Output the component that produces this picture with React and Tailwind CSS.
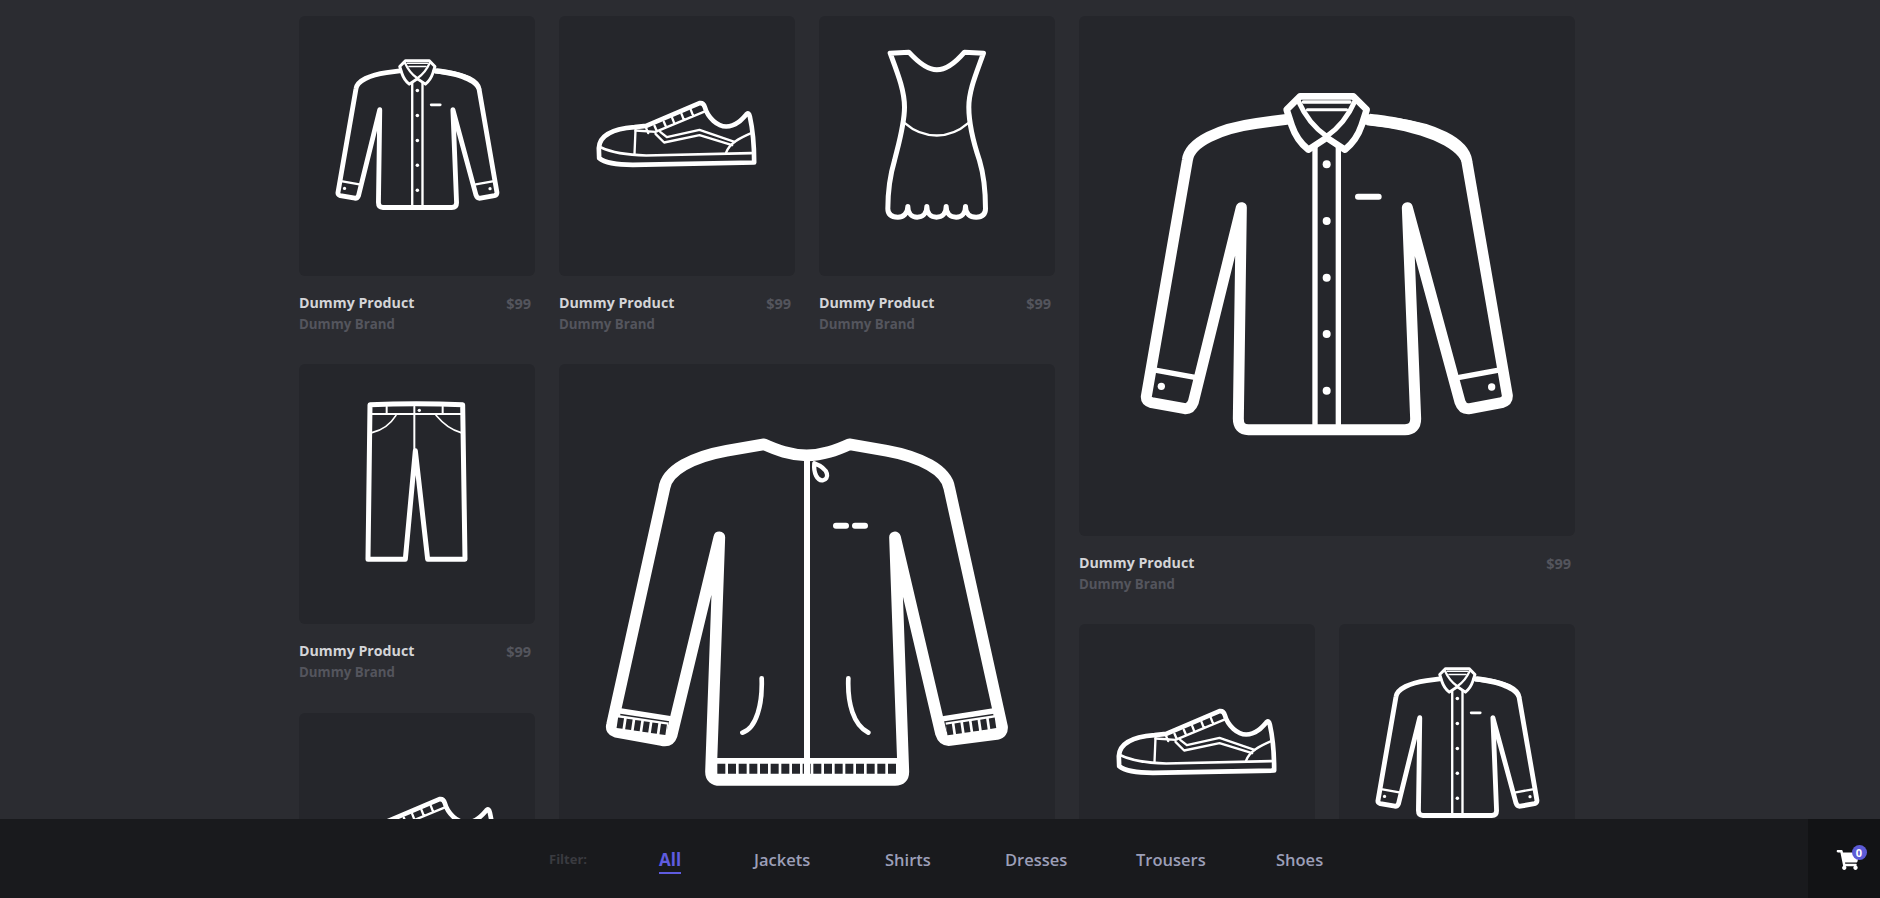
import React from "react";
import { FaShoppingCart } from "react-icons/fa";

const font = "font-['Open_Sans',sans-serif]";
const W = "#ffffff";
const CARD = "#25262b";

// Icons are traced at 3x the big size, so the viewBox is what scales them down
const Shirt = ({ size }) => (
  <svg width={size} height={size} viewBox="141 -19 1260 1260" fill="none" stroke={W} strokeLinecap="round" strokeLinejoin="round">
    <path strokeWidth="33" d="M650 177 L560 189 C450 204 358 245 352 300 L229 1008 Q228 1022 245 1027 L345 1045 Q362 1046 370 1025 L514 442 L505 1075 Q505 1108 535 1108 L1005 1108 Q1037 1108 1037 1075 L1012 442 L1170 1025 Q1178 1048 1200 1045 L1295 1027 Q1313 1022 1312 1005 L1190 300 C1180 245 1090 204 980 189 L890 177" />
    <path stroke="none" fill={W} d="M900 160 C1010 172 1185 205 1207 305 L1175 305 C1160 262 1060 212 890 195 Z" />
    <path strokeWidth="16" d="M260 930 L375 951 M1168 951 L1282 930" />
    <path strokeWidth="20" d="M690 108 L850 108 L890 148 L875 195 Q860 240 825 268 L770 232 L715 268 Q680 240 665 195 L650 148 Z" />
    <path strokeWidth="15" d="M685 122 Q715 190 770 228 Q825 190 855 122" />
    <path strokeWidth="10" d="M700 125 L840 125" />
    <path strokeWidth="9" d="M712 148 L830 148" />
    <path strokeWidth="16" d="M735 258 L735 1095 M805 258 L805 1095" />
    <path strokeWidth="18" d="M864 409 L926 409" />
    <g fill={W} stroke="none">
      {[312, 482, 652, 821, 991].map((y) => (
        <circle key={y} cx="770" cy={y} r="12" />
      ))}
      <circle cx="274" cy="978" r="11" />
      <circle cx="1265" cy="980" r="11" />
    </g>
  </svg>
);

const Jacket = ({ size }) => (
  <svg width={size} height={size} viewBox="51 -54 1260 1260" fill="none" stroke={W} strokeLinecap="round" strokeLinejoin="round">
    <path strokeWidth="35" d="M552 73 C590 90 630 106 680 106 C730 106 770 90 808 73 L920 92 C1020 110 1100 150 1108 205 L1266 920 Q1268 938 1250 942 L1110 960 Q1090 962 1083 940 L945 352 L970 1055 Q970 1080 945 1080 L420 1080 Q393 1080 393 1055 L418 352 L275 945 Q268 965 245 960 L108 935 Q92 930 96 915 L253 205 C260 150 340 110 440 92 Z" />
    <path strokeWidth="16" d="M122 873 L270 896 M1092 896 L1240 873 M405 1022 L960 1022" />
    <path stroke={W} strokeWidth="46" strokeLinecap="butt" d="M112 908 L262 930 M1100 930 L1250 908 M408 1046 L955 1046" />
    <path stroke={CARD} strokeWidth="32" strokeLinecap="butt" strokeDasharray="18 8" d="M112 908 L262 930 M1100 930 L1250 908" />
    <path stroke={CARD} strokeWidth="30" strokeLinecap="butt" strokeDasharray="24 8" d="M412 1046 L955 1046" />
    <path strokeWidth="18" d="M681 118 L681 1085" />
    <path strokeWidth="13" d="M703 130 C700 160 712 183 728 181 C748 178 750 148 703 130 Z" />
    <path strokeWidth="18" d="M768 317 L798 317 M825 317 L855 317" />
    <path strokeWidth="14" d="M545 775 C548 850 530 925 487 938 M805 775 C802 850 820 915 865 938" />
  </svg>
);

const Shoe = ({ size }) => (
  <svg width={size} height={size} viewBox="106.5 126.5 555 555" fill="none" stroke={W} strokeLinecap="round" strokeLinejoin="round">
    <path strokeWidth="14" d="M148 445 C150 405 190 387 255 382 L290 378 L450 310 Q462 308 466 322 C475 355 505 380 530 380 C560 380 578 358 592 342 Q598 338 601 350 C610 390 614 440 614 488 L250 495 C200 495 165 488 149 475 Z" />
    <path strokeWidth="8" d="M155 443 C180 455 220 465 290 467 L605 460" />
    <path strokeWidth="7" d="M258 390 L255 462" />
    <path strokeWidth="7" d="M258 392 L318 396 L470 333 M290 385 L296 400 M315 378 L322 394 M343 366 L350 382 M368 354 L375 372 M396 342 L403 360 M424 330 L431 348" />
    <path strokeWidth="7" d="M318 402 L344 428 L450 406 L548 436 M332 396 L352 412 L450 390 L555 426" />
    <path strokeWidth="7" d="M530 458 C540 430 570 415 605 400" />
  </svg>
);

const Dress = ({ size }) => (
  <svg width={size} height={size} viewBox="886.5 124.5 555 555" fill="none" stroke={W} strokeLinecap="round" strokeLinejoin="round">
    <path strokeWidth="15" d="M1022 158 L1078 155 C1110 190 1135 208 1162 208 C1190 208 1215 190 1245 155 L1302 158 C1280 220 1258 270 1258 320 C1258 370 1270 420 1290 480 C1305 530 1308 570 1308 625 C1308 645 1295 650 1280 650 C1262 650 1248 640 1248 618 C1248 640 1235 650 1220 650 C1203 650 1190 640 1190 618 C1190 640 1177 650 1161 650 C1145 650 1132 640 1132 618 C1132 640 1118 650 1103 650 C1088 650 1075 640 1075 618 C1075 640 1060 650 1045 650 C1028 650 1015 645 1015 625 C1015 570 1020 530 1035 480 C1050 420 1065 370 1065 320 C1065 270 1045 220 1022 158 Z" />
    <path strokeWidth="7" d="M1066 368 C1100 398 1130 405 1162 405 C1195 405 1225 395 1256 368" />
  </svg>
);

const Trousers = ({ size }) => (
  <svg width={size} height={size} viewBox="107 30 555 555" fill="none" stroke={W} strokeLinecap="round" strokeLinejoin="round">
    <path strokeWidth="15" d="M242 74 Q380 68 520 74 L527 538 L415 538 L378 212 L348 538 L236 538 Z" />
    <path strokeWidth="6" d="M248 102 L516 102 M292 80 L292 100 M375 80 L375 210 M460 80 L460 100" />
    <path strokeWidth="5" d="M248 158 C280 150 305 130 320 106 M515 158 C485 150 460 130 440 106" />
    <circle cx="390" cy="91" r="5" fill={W} stroke="none" />
  </svg>
);

const Product = ({ icon: Icon, big, caption = true }) => (
  <div className={big ? "w-[496px]" : "w-[236px]"}>
    <div className={`${big ? "h-[520px]" : "h-[260px]"} rounded-md bg-[#25262b] flex justify-center items-center`}>
      <div className="mb-6">
        <Icon size={big ? 420 : 185} />
      </div>
    </div>
    {caption && (
      <div className={`flex justify-between pt-[17px] pb-[29.4px] pr-1 ${font}`}>
        <div>
          <div className="text-[14.2px] leading-5 font-bold text-[#d4d5d8]">Dummy Product</div>
          <div className="text-[13.3px] leading-[22px] font-bold text-[#54555d]">Dummy Brand</div>
        </div>
        <div className="text-[14.5px] leading-[22px] font-bold text-[#54555d]">$99</div>
      </div>
    )}
  </div>
);

const filters = [
  { name: "Jackets", width: "w-[131px]" },
  { name: "Shirts", width: "w-[120px]" },
  { name: "Dresses", width: "w-[131px]" },
  { name: "Trousers", width: "w-[140px]" },
  { name: "Shoes", width: "w-[60px]" },
];

export default function App() {
  return (
    <div className="h-screen overflow-hidden flex flex-col bg-[#2b2c31]">
      <main className="flex-1 min-h-0 overflow-hidden pl-[299px] pt-4 flex gap-6 items-start">
        <div className="w-[236px]">
          <Product icon={Shirt} />
          <Product icon={Trousers} />
          <Product icon={Shoe} caption={false} />
        </div>
        <div className="w-[496px]">
          <div className="flex justify-between">
            <Product icon={Shoe} />
            <Product icon={Dress} />
          </div>
          <Product icon={Jacket} big caption={false} />
        </div>
        <div className="w-[496px]">
          <Product icon={Shirt} big />
          <div className="flex justify-between">
            <Product icon={Shoe} caption={false} />
            <Product icon={Shirt} caption={false} />
          </div>
        </div>
      </main>
      <footer className={`h-[79px] shrink-0 flex bg-[#191a1d] ${font}`}>
        <div className="flex-1 flex items-center pl-[549px] pt-[2px]">
          <span className="w-[110px] text-[13px] font-bold text-[#3a3b40]">Filter:</span>
          <div className="w-[95px]">
            <a className="inline-block text-[17px] font-bold text-[#5f5ce0] border-b-2 border-[#5f5ce0] leading-6 mt-[2px]">All</a>
          </div>
          {filters.map((f) => (
            <a key={f.name} className={`${f.width} text-[16.5px] font-semibold text-[#9c9fb8] leading-6`}>{f.name}</a>
          ))}
        </div>
        <div className="w-[72px] bg-[#121315] flex items-center justify-center">
          <div className="relative ml-[7px] mt-[2px]">
            <FaShoppingCart className="text-white w-[24px] h-[20px]" />
            <span className="absolute -top-[5px] -right-[7px] w-[15px] h-[15px] rounded-full bg-[#5c5bd6] text-white text-[11px] font-bold leading-[15px] text-center">0</span>
          </div>
        </div>
      </footer>
    </div>
  );
}
